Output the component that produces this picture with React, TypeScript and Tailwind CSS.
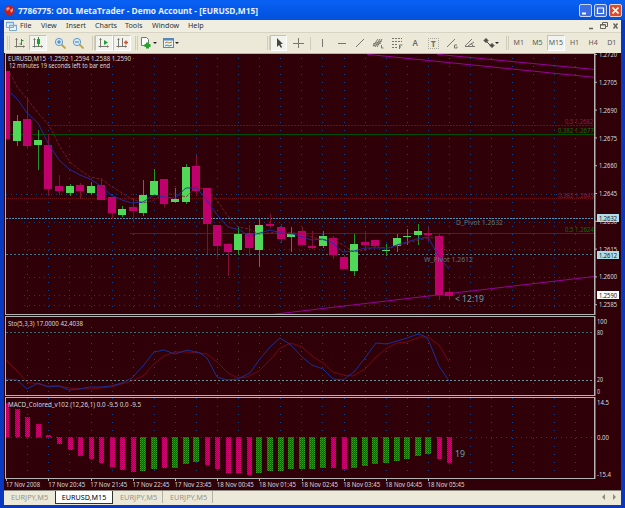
import type { ReactNode } from "react";

type Candle = [top: number, bottom: number, high: number, low: number, up: 0 | 1];

// body top, body bottom, wick top, wick bottom, rising
const CANDLES: Candle[] = [
  [71, 139, 71, 139, 0], [121, 141, 115, 146, 1], [119, 146, 97, 149, 0], [140, 145, 130, 170, 1],
  [145, 189, 134, 196, 0], [186, 191, 175, 195, 0], [186, 193, 184, 196, 1], [185, 191, 183, 199, 0],
  [186, 193, 182, 195, 1], [185, 200, 178, 200, 0], [197, 213, 197, 219, 0], [209, 215, 206, 217, 1],
  [207, 211, 198, 222, 0], [195, 213, 180, 216, 1], [181, 195, 169, 195, 1], [179, 204, 179, 207, 0],
  [199, 202, 188, 203, 1], [167, 202, 164, 204, 1], [166, 191, 155, 196, 0], [188, 224, 188, 254, 0],
  [225, 246, 225, 257, 0], [244, 252, 243, 276, 0], [234, 250, 227, 255, 1], [233, 248, 225, 256, 0],
  [225, 250, 219, 267, 1], [224, 226, 214, 228, 0], [227, 239, 224, 243, 0], [234, 237, 227, 252, 1],
  [231, 245, 227, 245, 0], [246, 248, 231, 249, 0], [236, 246, 231, 248, 1], [238, 255, 236, 259, 0],
  [257, 269, 255, 269, 0], [244, 271, 234, 276, 1], [242, 245, 231, 250, 0], [240, 246, 240, 247, 0],
  [250, 251, 244, 256, 1], [238, 246, 234, 252, 1], [236, 237, 229, 245, 1], [231, 235, 224, 245, 1],
  [233, 235, 227, 241, 0], [236, 295, 234, 300, 0], [292, 296, 288, 300, 0],
];

// y of the loose end of each histogram bar; the other end is the zero line
const MACD_ENDS = [
  403, 409, 417, 424, 435, 444, 450, 456, 459, 463, 467, 470, 472, 471, 469, 468, 468, 464, 462, 465, 469, 473,
  473, 475, 473, 471, 471, 469, 469, 469, 468, 468, 469, 468, 466, 464, 463, 461, 459, 456, 454, 459, 463,
];
const MACD_GREEN = [13, 14, 16, 17, 18, 24, 25, 26, 27, 28, 29, 30, 33, 34, 35, 36, 37, 38, 39, 40];
const ZERO_Y = 437;

const barX = (i: number) => 6.2 + i * 10.55;
const GRID_X = Array.from({ length: 27 }, (_, i) => Math.round(27.3 + i * 21.08) + 0.5);

const MA_FAST =
  "11,93 18,100 27,113 38,123 48,143 59,160 69,169 80,175 90,179 101,186 111,195 122,200 132,203 143,202 154,195 164,197 175,198 186,188 197,188 208,202 218,216 228,227 240,230 249,236 260,233 270,230 281,233 293,234 302,237 312,240 322,239 333,243 343,252 354,251 365,248 375,248 388,248 400,244 410,241 417,239 428,237 438,255 449,269";
const MA_SLOW =
  "10,73 17,87 28,100 38,113 48,124 53,133 60,147 70,162 80,170 90,177 101,179 111,186 122,193 132,199 143,203 154,200 164,194 175,194 186,197 196,187 208,190 217,200 227,215 238,227 249,229 259,234 270,233 281,231 291,233 302,233 312,237 322,240 333,239 343,245 354,252 365,250 375,247 390,248 400,245 410,242 428,238 438,237 449,254";
const STO_MAIN =
  "6,379 17,380 27,389 38,383 48,387 59,386 69,390 80,389 90,387 101,387 111,386 122,383 132,378 143,366 154,352 164,350 175,354 187,350 200,353 207,358 217,377 227,380 238,379 250,373 259,360 270,347 280,338 291,345 302,357 312,365 323,369 333,379 343,380 354,372 365,358 376,343 387,344 397,341 407,338 418,334 424,336 428,339 439,366 449,381";
const STO_SIGNAL =
  "6,360 17,371 27,382 38,384 48,386 59,386 69,388 90,389 111,387 132,381 143,376 154,364 164,356 175,352 187,352 200,353 207,354 217,362 228,373 238,378 247,377 259,371 270,360 280,348 291,343 302,347 312,356 323,363 333,372 343,375 353,376 365,369 376,357 387,348 397,343 407,342 420,337 428,337 439,345 449,362";

const PRICES = ["1.2720", "1.2705", "1.2690", "1.2675", "1.2660", "1.2645", "1.2630", "1.2615", "1.2600", "1.2585"];
const TIMES = [
  "17 Nov 2008", "17 Nov 20:45", "17 Nov 21:45", "17 Nov 22:45", "17 Nov 23:45", "18 Nov 00:45",
  "18 Nov 01:45", "18 Nov 02:45", "18 Nov 03:45", "18 Nov 04:45", "18 Nov 05:45",
];

const MENUS = [
  { label: "File", width: "w-[21px]" },
  { label: "View", width: "w-[25px]" },
  { label: "Insert", width: "w-[29px]" },
  { label: "Charts", width: "w-[30px]" },
  { label: "Tools", width: "w-[27px]" },
  { label: "Window", width: "w-[36px]" },
  { label: "Help", width: "w-[20px]" },
];

function Label({ x, y, w, size = 7, fill = "#d6dada", children }: {
  x: number; y: number; w: number; size?: number; fill?: string; children: string;
}) {
  return (
    <text x={x} y={y} fontSize={size} fill={fill} textLength={w} lengthAdjust="spacingAndGlyphs" xmlSpace="preserve">
      {children}
    </text>
  );
}

function VerticalGrid({ from, to }: { from: number; to: number }) {
  return (
    <g stroke="#0c4a94" strokeDasharray="1 7" shapeRendering="crispEdges">
      {GRID_X.filter((x) => x < 594).map((x) => (
        <line key={x} x1={x} x2={x} y1={from} y2={to} />
      ))}
    </g>
  );
}

function Frame({ top, bottom }: { top: number; bottom: number }) {
  return (
    <g shapeRendering="crispEdges">
      <rect x={5.5} y={top + 0.5} width={589} height={bottom - top} fill="none" stroke="#b4b4b4" />
      <rect x={595} y={top} width={1} height={bottom - top + 1} fill="#566464" />
    </g>
  );
}

function PriceChart() {
  return (
    <svg className="block h-[263px] w-[617px] shrink-0" viewBox="4 53 617 263">
      <VerticalGrid from={58} to={313} />
      <g stroke="#0c4080" strokeDasharray="1 4" shapeRendering="crispEdges">
        {[194.5, 222.5, 249.5, 277.5, 295.5, 305.5].map((y) => (
          <line key={y} x1={y < 200 ? 6 : 24} x2={594} y1={y} y2={y} />
        ))}
      </g>
      <g shapeRendering="crispEdges">
        <line x1={48} x2={594} y1={125.5} y2={125.5} stroke="#68101c" strokeDasharray="2 1" />
        <line x1={6} x2={594} y1={134.5} y2={134.5} stroke="#005000" />
        <line x1={6} x2={594} y1={198.5} y2={198.5} stroke="#68101c" strokeDasharray="1 1" />
        <line x1={6} x2={594} y1={218.5} y2={218.5} stroke="#5790b4" strokeDasharray="2 1" />
        <line x1={130} x2={594} y1={233.5} y2={233.5} stroke="#005000" />
        <line x1={6} x2={594} y1={254.5} y2={254.5} stroke="#467888" strokeDasharray="2 2" />
      </g>
      <g stroke="#98009c" strokeWidth={1}>
        <line x1={437} y1={54.3} x2={595} y2={69.5} />
        <line x1={367} y1={54.3} x2={595} y2={77.4} />
        <line x1={272} y1={314.5} x2={595} y2={276.4} />
      </g>
      <g shapeRendering="crispEdges">
        {CANDLES.map(([top, bottom, high, low, up], i) => {
          const x = Math.round(barX(i));
          const left = Math.max(6, x - 4);
          return (
            <g key={i}>
              <rect x={x} y={high} width={1} height={low - high} fill={up ? "#209828" : "#801030"} />
              <rect x={left} y={top} width={x + 4 - left} height={bottom - top} fill={up ? "#50d858" : "#c0006c"} />
            </g>
          );
        })}
      </g>
      <polyline points={MA_SLOW} fill="none" stroke="#84202c" strokeWidth={0.8} strokeDasharray="3 1.5" />
      <polyline points={MA_FAST} fill="none" stroke="#1c30b0" strokeWidth={0.9} />
      <Frame top={53} bottom={314} />
      <Label x={8} y={61.3} w={123}>{"EURUSD,M15  1.2592 1.2594 1.2588 1.2590"}</Label>
      <Label x={9} y={68.3} w={101}>12 minutes 19 seconds left to bar end</Label>
      <Label x={565} y={124} w={28} fill="#941c34">0.5 1.2682</Label>
      <Label x={558} y={133} w={36} fill="#087008">0.382 1.2677</Label>
      <Label x={558} y={197.5} w={36} fill="#941c34">0.382 1.2643</Label>
      <Label x={565} y={232} w={29} fill="#087008">0.5 1.2624</Label>
      <Label x={456} y={225.3} w={47} fill="#5c7676">D_Pivot 1.2632</Label>
      <Label x={424} y={261.5} w={49} fill="#5c7676">W_Pivot 1.2612</Label>
      <Label x={455} y={302.2} w={29} size={8} fill="#68a0ae">{"< 12:19"}</Label>
      {PRICES.map((price, i) => (
        <g key={price}>
          <line x1={595} x2={597} y1={54.5 + i * 27.8} y2={54.5 + i * 27.8} stroke="#b4b4b4" />
          <Label x={599} y={57.4 + i * 27.75} w={18}>{price}</Label>
        </g>
      ))}
      <rect x={597} y={214} width={22} height={8} fill="#b0dce8" />
      <rect x={597} y={251} width={22} height={8} fill="#b0dce8" />
      <rect x={597} y={291} width={22} height={8} fill="#ffffff" />
      <Label x={599} y={220.6} w={18} fill="#101820">1.2632</Label>
      <Label x={599} y={257.6} w={18} fill="#101820">1.2612</Label>
      <Label x={599} y={297.6} w={18} fill="#101010">1.2590</Label>
    </svg>
  );
}

function Stochastic() {
  return (
    <svg className="block h-[81px] w-[617px] shrink-0" viewBox="4 316 617 81">
      <VerticalGrid from={327} to={395} />
      <g stroke="#6c9494" strokeDasharray="2 2" shapeRendering="crispEdges">
        <line x1={6} x2={595} y1={332.5} y2={332.5} stroke="#3c6c70" />
        <line x1={6} x2={595} y1={380.5} y2={380.5} />
      </g>
      <polyline points={STO_SIGNAL} fill="none" stroke="#84081c" strokeWidth={0.8} />
      <polyline points={STO_MAIN} fill="none" stroke="#1038a8" strokeWidth={0.9} />
      <Frame top={316} bottom={395} />
      <Label x={8} y={325.5} w={75}>Sto(5,3,3) 17.0000 42.4038</Label>
      <Label x={597} y={323.6} w={10}>100</Label>
      <Label x={597} y={335} w={6}>80</Label>
      <Label x={597} y={382.3} w={6}>20</Label>
      <Label x={597} y={394} w={3}>0</Label>
    </svg>
  );
}

function Macd() {
  return (
    <svg className="block h-[93px] w-[617px] shrink-0" viewBox="4 397 617 93">
      <defs>
        <pattern id="falling" width="2" height="2" patternUnits="userSpaceOnUse">
          <rect width="2" height="2" fill="#700838" />
          <rect width="1" height="1" fill="#d80078" />
          <rect x="1" y="1" width="1" height="1" fill="#d80078" />
        </pattern>
        <pattern id="rising" width="2" height="2" patternUnits="userSpaceOnUse">
          <rect width="2" height="2" fill="#106008" />
          <rect width="1" height="1" fill="#38a020" />
          <rect x="1" y="1" width="1" height="1" fill="#288010" />
        </pattern>
      </defs>
      <VerticalGrid from={398} to={478} />
      <line x1={6} x2={594} y1={437.5} y2={437.5} stroke="#104080" strokeDasharray="1 4" shapeRendering="crispEdges" />
      <g shapeRendering="crispEdges">
        {MACD_ENDS.map((end, i) => {
          const x = Math.round(barX(i));
          const rising = MACD_GREEN.includes(i);
          const left = Math.max(6, rising ? x - 3 : x - 2);
          return (
            <rect
              key={i}
              x={left}
              y={Math.min(end, ZERO_Y)}
              width={x + 3 - left}
              height={Math.abs(end - ZERO_Y)}
              fill={rising ? "url(#rising)" : "url(#falling)"}
            />
          );
        })}
      </g>
      <Frame top={397} bottom={478} />
      <Label x={8} y={406.5} w={133}>MACD_Colored_v102 (12,26,1) 0.0 -9.5 0.0 -9.5</Label>
      <Label x={455} y={457} w={10} size={9} fill="#68a0ae">19</Label>
      <Label x={597} y={405} w={12}>14.5</Label>
      <Label x={597} y={439.5} w={12}>0.00</Label>
      <Label x={597} y={477} w={14}>-15.4</Label>
      {TIMES.map((time, i) => (
        <g key={time}>
          <rect x={Math.round(barX(i * 4))} y={479} width={1} height={2} fill="#b4b4b4" />
          <Label x={6 + i * 42.15} y={487.3} w={i ? 37 : 34}>{time}</Label>
        </g>
      ))}
    </svg>
  );
}

function Tool({ children, active = false, w = "w-[18px]" }: { children: ReactNode; active?: boolean; w?: string }) {
  return (
    <div
      className={`flex h-4 shrink-0 items-center justify-center border ${w} ${
        active ? "border-[#c4c2b4] border-r-white border-b-white bg-[#f3f3ee]" : "border-transparent"
      }`}
    >
      {children}
    </div>
  );
}

function Icon({ children, w = 12, color = "#77756c" }: { children: ReactNode; w?: number; color?: string }) {
  return (
    <svg width={w} height={12} viewBox={`0 0 ${w} 12`} fill="none" stroke={color} strokeWidth={1} className="shrink-0">
      {children}
    </svg>
  );
}

function Separator() {
  return <div className="h-[14px] w-[3px] shrink-0 border-x border-[#cfccbc]" />;
}

const AXES = <path d="M2.5 1.5v9M.5 9.5h10M1.5 2.5l1-1 1 1M9.5 8.5l1 1-1 1" />;

function Toolbar() {
  return (
    <div className="flex h-5 items-center bg-[#ece9d8] pl-[3px]">
      <Separator />
      <div className="flex w-[177px] shrink-0 items-center pl-[1px]">
        <Tool>
          <Icon>{AXES}<path d="M7.5 2v6M7.5 3.500h2M5.500 7h2" stroke="#229432" /></Icon>
        </Tool>
        <Tool active>
          <Icon>{AXES}<path d="M6.500 0v9" stroke="#229432" /><rect x="5" y="2" width="3" height="5" fill="#20a030" stroke="none" /></Icon>
        </Tool>
        <div className="w-1" />
        <Tool>
          <Icon color="#5f96cc"><path d="M7.500 7.500l4 4" stroke="#b9a34f" strokeWidth={1.800} /><circle cx={5} cy={5} r={3.600} fill="#d8ecf8" /><path d="M3 5h4M5 3v4" stroke="#3078b8" /></Icon>
        </Tool>
        <Tool>
          <Icon color="#5f96cc"><path d="M7.500 7.500l4 4" stroke="#b9a34f" strokeWidth={1.800} /><circle cx={5} cy={5} r={3.600} fill="#d8ecf8" /><path d="M3 5h4" stroke="#3078b8" /></Icon>
        </Tool>
        <div className="w-[5px]" />
        <Separator />
        <Tool active>
          <Icon>{AXES}<path d="M6 3l4 2.500-4 2.500z" fill="#20a030" stroke="none" /></Icon>
        </Tool>
        <Tool active>
          <Icon>{AXES}<path d="M6.500 1v8" /><path d="M8 5.500h4M10 3.500v4" stroke="#d05030" strokeWidth={1.400} /></Icon>
        </Tool>
        <div className="w-1" />
        <Separator />
        <Tool w="w-[21px]">
          <Icon w={17}>
            <path d="M1.500 .5h5l2 2v6h-7z" fill="#fff" />
            <path d="M4.500 8.500h6M7.500 5.500v6" stroke="#24a42c" strokeWidth={3} />
            <path d="M13 5h4l-2 2z" fill="#222" stroke="none" />
          </Icon>
        </Tool>
        <Tool w="w-[25px]">
          <Icon w={17} color="#5888b8">
            <rect x=".5" y="1.500" width="10" height="9" fill="#e8f4fc" />
            <path d="M0 2.500h11" strokeWidth={2} />
            <path d="M2 6l2-1 2 1 3-1" stroke="#b08030" /><path d="M2 9l2-1 2 1 3-1" stroke="#30a040" />
            <path d="M12 5h4l-2 2z" fill="#222" stroke="none" />
          </Icon>
        </Tool>
      </div>
      <div className="w-[80px] shrink-0" />
      <Separator />
      <Tool active w="w-[17px]">
        <Icon><path d="M4 1v9l2-2 2 3 1-1-1.500-3H10z" fill="#45443f" stroke="none" /></Icon>
      </Tool>
      <Tool w="w-[21px]"><Icon><path d="M6.500 1v10M1 6.500h11M5 6.500h3" /></Icon></Tool>
      <div className="w-[3px]" />
      <div className="h-[13px] w-px bg-[#cfccbc]" />
      <Tool w="w-[21px]"><Icon><path d="M6.500 2v8" /></Icon></Tool>
      <Tool w="w-[19px]"><Icon><path d="M2 6.500h8" /></Icon></Tool>
      <Tool><Icon><path d="M2 10l8-8" /></Icon></Tool>
      <Tool><Icon><path d="M1 9l5-7M3 10l5-8M5 10l5-8M1 7l9-3M1 9l8-3" /><path d="M9.500 8v3h2" /></Icon></Tool>
      <Tool w="w-[19px]"><Icon><path d="M1 1.500h10M1 4.500h10M1 7.500h6M1 10.500h5" strokeDasharray="2 1" /><path d="M8.500 12v-4h3M8 10h2" /></Icon></Tool>
      <Tool><span className="text-[8px] font-semibold text-[#6b6961]">A</span></Tool>
      <Tool><span className="border border-dotted border-[#aaa89c] px-[2px] text-[8px] leading-[9px] font-bold text-[#6b6961]">T</span></Tool>
      <Tool w="w-[19px]"><Icon><path d="M1 10l8-8" /><path d="M11 8H8.500v3H11V9.500" /></Icon></Tool>
      <Tool><Icon><path d="M1 9.500h10M1 9l7-7M4 9l6-4M7 6l2 3" /></Icon></Tool>
      <Tool w="w-[23px]">
        <Icon w={16} color="#4b4a45">
          <path d="M1 3.500l2-2 2 2-2 2z" fill="#4b4a45" />
          <path d="M4 5l4 4M7 8.500l2-2 2 2-2 2z" fill="#4b4a45" />
          <path d="M12 5h4l-2 2z" fill="#222" stroke="none" />
        </Icon>
      </Tool>
      <div className="w-[5px]" />
      <Separator />
      {["M1", "M5", "M15", "H1", "H4", "D1"].map((period) => (
        <Tool key={period} active={period === "M15"} w="w-[18.6px]">
          <span className="text-[7px] text-[#5d5b54]">{period}</span>
        </Tool>
      ))}
    </div>
  );
}

function TitleBar() {
  return (
    <div className="flex h-[20px] shrink-0 items-center bg-linear-to-b from-[#0a62f4] via-[#0558e8] to-[#0450dc] pr-[3px] pl-1">
      <svg width={11} height={11} viewBox="0 0 11 11" className="mr-[3px] shrink-0">
        <circle cx={5.500} cy={5.500} r={5} fill="#c81c18" />
        <path d="M2 3l3-1 1 2-3 2zM6 5l3-2v3L7 8z" fill="#f09080" />
      </svg>
      <svg width={260} height={14} className="shrink-0 font-['Open_Sans',sans-serif]">
        <text x={0} y={10.500} fontSize={9} fontWeight={700} fill="#e8f0fc" textLength={240} lengthAdjust="spacingAndGlyphs">
          7786775: ODL MetaTrader - Demo Account - [EURUSD,M15]
        </text>
      </svg>
      <div className="ml-auto flex gap-[2px]">
        <svg width={13} height={13} viewBox="0 0 13 13">
          <rect x=".5" y=".5" width="12" height="12" rx="1.500" fill="#3c6ce0" stroke="#c8d8f8" />
          <path d="M3 9.500h4" stroke="#fff" strokeWidth={2} />
        </svg>
        <svg width={13} height={13} viewBox="0 0 13 13">
          <rect x=".5" y=".5" width="12" height="12" rx="1.500" fill="#3c6ce0" stroke="#c8d8f8" />
          <path d="M3 4h7M3.500 4v5.500h6V4" fill="none" stroke="#fff" strokeWidth={1.200} />
        </svg>
        <svg width={13} height={13} viewBox="0 0 13 13">
          <rect x=".5" y=".5" width="12" height="12" rx="1.500" fill="#dc4c28" stroke="#f0d0c8" />
          <path d="M3.500 3.500l6 6M9.500 3.500l-6 6" stroke="#fff" strokeWidth={1.700} />
        </svg>
      </div>
    </div>
  );
}

function MenuBar() {
  return (
    <div className="flex h-[13px] shrink-0 items-center border-b border-[#d8d4c4] bg-[#f0eee0] pl-[2px]">
      <svg width={11} height={11} viewBox="0 0 11 11" className="mr-[3px] shrink-0" fill="#e8f4fc" stroke="#78a8d8">
        <path d="M.5 1.500h7v5h-7zM3.500 4.500h7v5h-7z" />
        <path d="M0 1.500h8M3 4.500h8" strokeWidth={1.500} />
      </svg>
      {MENUS.map(({ label, width }) => (
        <span key={label} className={`${width} shrink-0 text-[7.2px] leading-none whitespace-nowrap text-[#33322e]`}>
          {label}
        </span>
      ))}
      <svg width={33} height={10} viewBox="0 0 33 10" className="ml-auto shrink-0" fill="none" stroke="#65635c">
        <path d="M1 7.500h4" strokeWidth={1.500} />
        <path d="M14.500 3.500v-2h5v4h-2M12.500 3.500h5v4h-5zM12 4h5" />
        <path d="M25.500 2.500l4 5M29.500 2.500l-4 5" strokeWidth={1.400} />
      </svg>
    </div>
  );
}

function ChartTabs() {
  return (
    <div className="flex h-[15px] shrink-0 items-start border-t border-[#8c8a80] bg-[#ece9d8] text-[7.4px] leading-[12px] text-[#96948a]">
      <span className="w-[51px] pl-[7px]">EURJPY,M5</span>
      <span className="h-[13px] w-[58px] border border-t-0 border-[#33322e] bg-white text-center text-[7.2px] text-black">EURUSD,M15</span>
      <span className="w-[50px] border-r border-[#b4b2a4] pl-[7px]">EURJPY,M5</span>
      <span className="w-[50px] border-r border-[#b4b2a4] pl-[7px]">EURJPY,M5</span>
      <svg width={16} height={8} viewBox="0 0 16 8" className="mt-[2px] mr-[3px] ml-auto" fill="#8c8a80">
        <path d="M3 1v6L0 4zM11 1v6l3-3z" />
      </svg>
    </div>
  );
}

export default function App() {
  return (
    <div className="flex h-[508px] w-[625px] flex-col overflow-hidden bg-[#0838c0] font-['Noto_Sans',sans-serif]">
      <TitleBar />
      <div className="mr-[4px] ml-[4px] flex flex-col overflow-hidden">
        <MenuBar />
        <Toolbar />
        <div className="flex flex-col bg-[#300008]">
          <PriceChart />
          <Stochastic />
          <Macd />
        </div>
        <ChartTabs />
      </div>
    </div>
  );
}
